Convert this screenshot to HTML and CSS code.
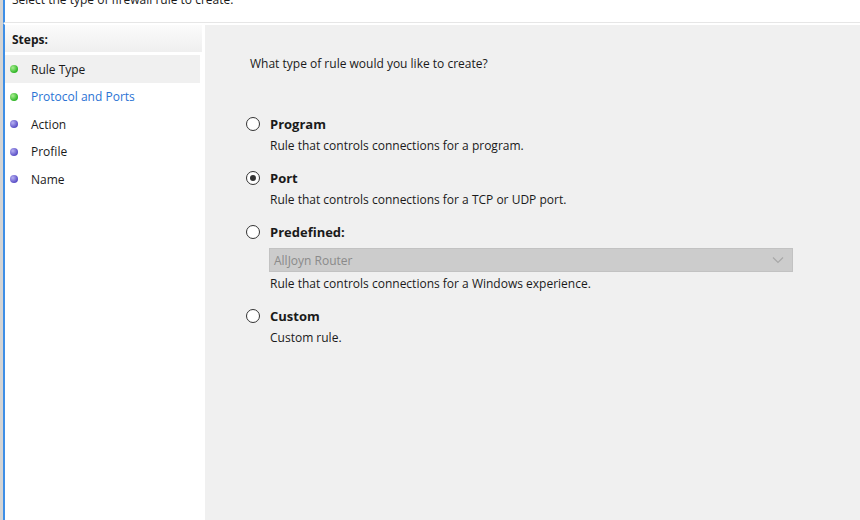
FILE: index.html
```html
<!DOCTYPE html>
<html lang="en">
<head>
    <meta charset="UTF-8">
    <title>New Inbound Rule Wizard</title>
    <link rel="stylesheet" href="styles.css">
</head>
<body>
    <div class="window">
        <div class="header">
            <p class="header-text">Select the type of firewall rule to create.</p>
        </div>

        <div class="main">
            <div class="steps">
                <div class="steps-title">Steps:</div>
                <ul class="step-list">
                    <li class="step done current"><span class="dot"></span>Rule Type</li>
                    <li class="step done link"><span class="dot"></span>Protocol and Ports</li>
                    <li class="step"><span class="dot"></span>Action</li>
                    <li class="step"><span class="dot"></span>Profile</li>
                    <li class="step"><span class="dot"></span>Name</li>
                </ul>
            </div>

            <div class="content">
                <p class="question">What type of rule would you like to create?</p>

                <div class="option">
                    <label class="radio-row"><span class="radio"></span><strong>Program</strong></label>
                    <p class="desc">Rule that controls connections for a program.</p>
                </div>

                <div class="option">
                    <label class="radio-row"><span class="radio checked"></span><strong>Port</strong></label>
                    <p class="desc">Rule that controls connections for a TCP or UDP port.</p>
                </div>

                <div class="option">
                    <label class="radio-row"><span class="radio"></span><strong>Predefined:</strong></label>
                    <div class="select">
                        <span>AllJoyn Router</span>
                        <svg width="12" height="8" viewBox="0 0 12 8"><path d="M1 1.5l5 5 5-5" fill="none" stroke="#a8a8a8" stroke-width="1.2"/></svg>
                    </div>
                    <p class="desc tight">Rule that controls connections for a Windows experience.</p>
                </div>

                <div class="option">
                    <label class="radio-row"><span class="radio"></span><strong>Custom</strong></label>
                    <p class="desc">Custom rule.</p>
                </div>
            </div>
        </div>
    </div>
</body>
</html>
```

FILE: styles.css
```css
body {
    margin: 0;
    font-family: 'Open Sans', 'Liberation Sans', Arial, sans-serif;
    font-size: 12px;
    color: #1a1a1a;
    background: #ffffff;
}
.window {
    height: 520px;
    display: flex;
    flex-direction: column;
    border-left: 3px solid #d4d4d4;
    overflow: hidden;
}
.header {
    height: 22px;
    border-left: 2px solid #3d8ee6;
    border-bottom: 1px solid #e6e6e6;
    background: #ffffff;
    overflow: hidden;
}
.header-text {
    margin: -7px 0 0 7px;
    line-height: 14px;
}
.main {
    flex: 1;
    display: flex;
    border-left: 2px solid #3d8ee6;
    border-top: 2px solid #ffffff;
}
.steps {
    width: 197px;
    background: #ffffff;
    border-right: 3px solid #ffffff;
    box-shadow: 1px 0 0 #f2f2f2;
}
.steps-title {
    height: 27px;
    line-height: 29px;
    padding-left: 7px;
    font-weight: bold;
    background: linear-gradient(#fbfbfb, #efefef);
    margin-bottom: 3px;
}
.step-list {
    list-style: none;
    margin: 0;
    padding: 0;
}
.step {
    height: 27.5px;
    display: flex;
    align-items: center;
    margin-right: 2px;
    padding-left: 5px;
    padding-top: 1px;
    box-sizing: border-box;
}
.step.current {
    background: #f0f0f0;
}
.step.link {
    color: #2a73d4;
}
.dot {
    width: 8px;
    height: 8px;
    border-radius: 50%;
    margin-right: 13px;
    background: radial-gradient(circle at 35% 35%, #b7b0f2, #5a4fc6 70%);
}
.step.done .dot {
    background: radial-gradient(circle at 35% 35%, #a8ee90, #2fb526 70%);
}
.content {
    flex: 1;
    background: #f0f0f0;
    padding: 31px 0 0 41px;
}
.question {
    margin: 0 0 44px 4px;
    line-height: 16px;
}
.option {
    margin-bottom: 16px;
}
.radio-row {
    display: flex;
    align-items: center;
    height: 16px;
    font-size: 13px;
}
.radio {
    box-sizing: border-box;
    width: 14px;
    height: 14px;
    border: 1px solid #333333;
    border-radius: 50%;
    background: #ffffff;
    margin-right: 10px;
    position: relative;
}
.radio.checked::after {
    content: "";
    position: absolute;
    left: 3px;
    top: 3px;
    width: 6px;
    height: 6px;
    border-radius: 50%;
    background: #333333;
}
.desc {
    margin: 6px 0 0 24px;
    line-height: 16px;
}
.desc.tight {
    margin-top: 4px;
}
.select {
    margin: 8px 0 0 23px;
    width: 524px;
    height: 24px;
    box-sizing: border-box;
    border: 1px solid #c2c2c2;
    background: #cccccc;
    color: #8a8a8a;
    display: flex;
    align-items: center;
    justify-content: space-between;
    padding: 0 8px 0 4px;
}
```
